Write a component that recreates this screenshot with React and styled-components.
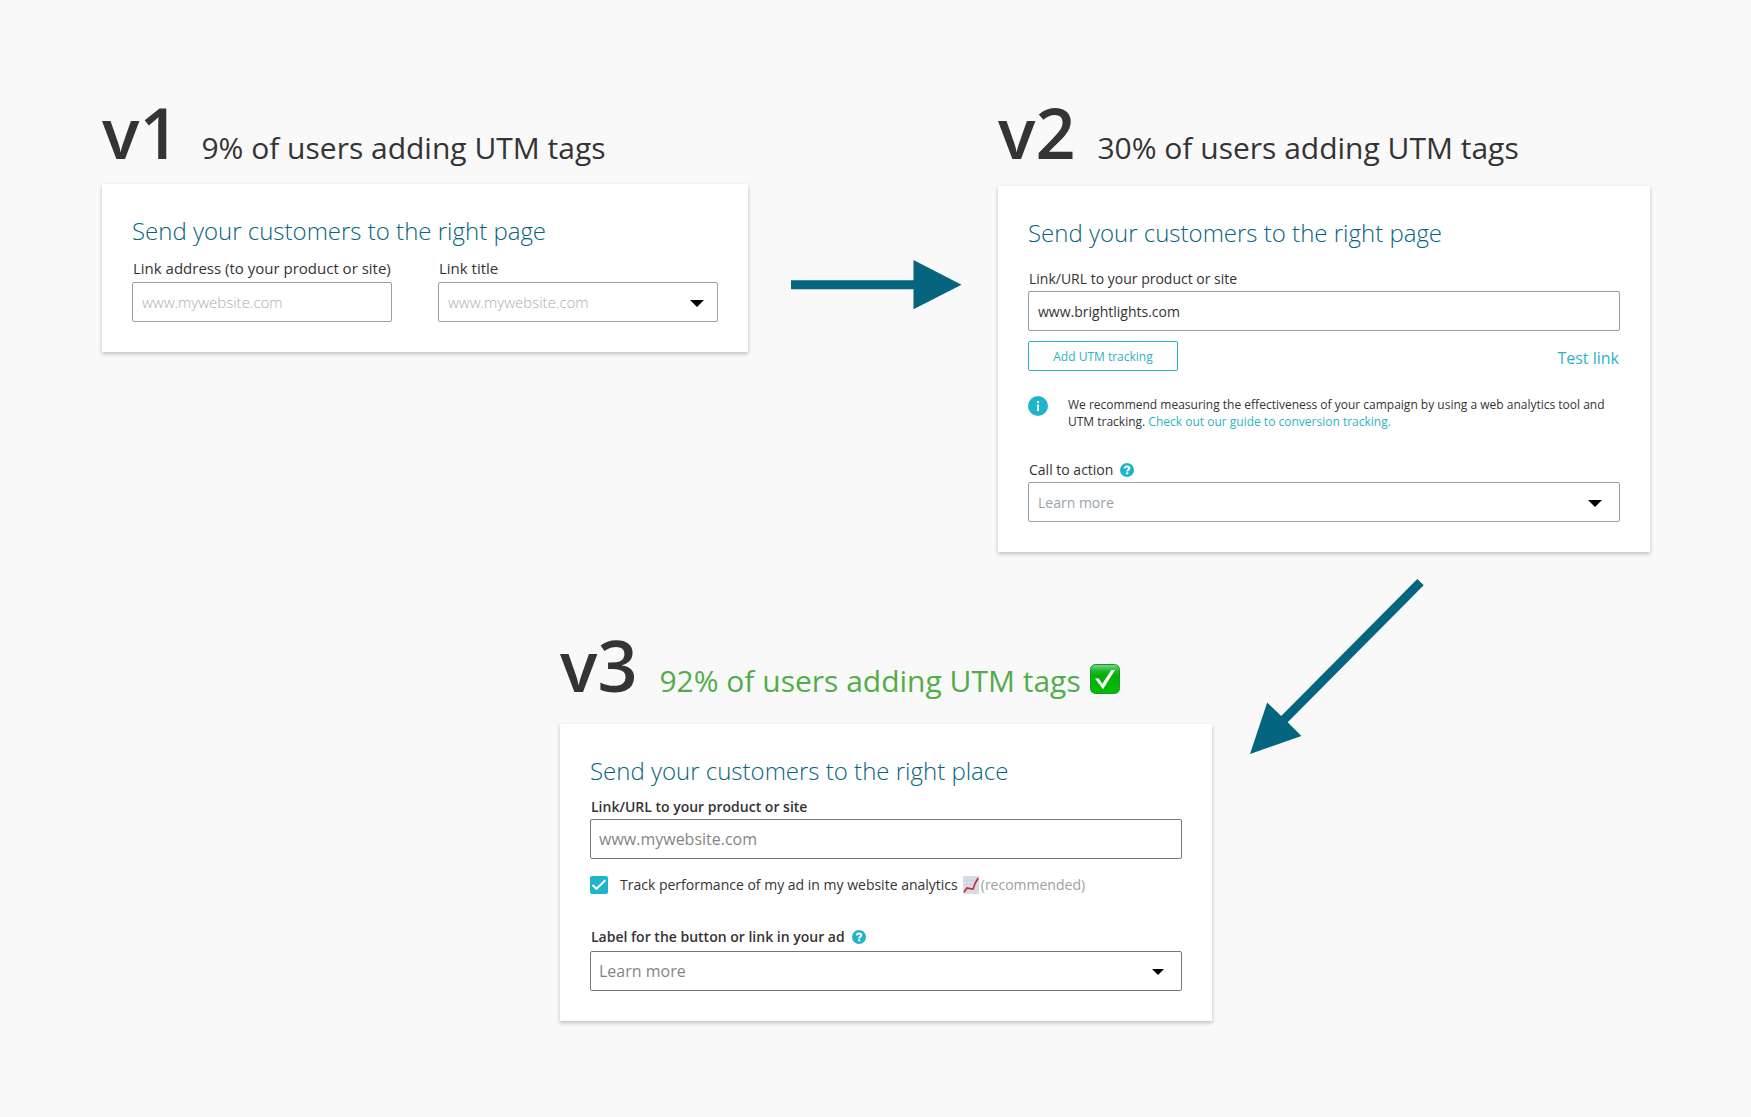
import { useState } from "react";
import styled, { createGlobalStyle } from "styled-components";

const App = () => {
  const [tracked, setTracked] = useState(true);

  return (
    <Page>
      <GlobalStyle />
      <TopRow>
        <Version>
          <Heading $gap={16}>
            <Name>v1</Name>
            <Result>9% of users adding UTM tags</Result>
          </Heading>
          <Card>
            <Title $gap={10}>Send your customers to the right page</Title>
            <FieldPair>
              <div>
                <LabelRow $gap={4}>
                  <Label htmlFor="v1-address" $size={15}>
                    Link address (to your product or site)
                  </Label>
                </LabelRow>
                <TextInput
                  id="v1-address"
                  type="text"
                  placeholder="www.mywebsite.com"
                />
              </div>
              <div>
                <LabelRow $gap={4}>
                  <Label htmlFor="v1-title" $size={15}>
                    Link title
                  </Label>
                </LabelRow>
                <Dropdown id="v1-title" option="www.mywebsite.com" faint />
              </div>
            </FieldPair>
          </Card>
        </Version>

        <RightArrow viewBox="0 0 171 50" aria-hidden="true">
          <path d="M0 20.3H122.5V0L170.5 24.8L122.5 49.3V29.3H0Z" />
        </RightArrow>

        <Version>
          <Heading $gap={18}>
            <Name>v2</Name>
            <Result>30% of users adding UTM tags</Result>
          </Heading>
          <Card>
            <Title $gap={19}>Send your customers to the right page</Title>
            <LabelRow $gap={2}>
              <Label htmlFor="v2-url">Link/URL to your product or site</Label>
            </LabelRow>
            <TextInput
              id="v2-url"
              type="text"
              defaultValue="www.brightlights.com"
            />
            <Actions>
              <OutlineButton type="button">Add UTM tracking</OutlineButton>
              <TestLink href="#test">Test link</TestLink>
            </Actions>
            <Note>
              <InfoIcon viewBox="0 0 20 20" aria-hidden="true">
                <circle cx="10" cy="10" r="10" fill="#1fb5c9" />
                <path d="M9 5h2v2H9zM9 8.5h2V15H9z" fill="#fff" />
              </InfoIcon>
              <NoteText>
                We recommend measuring the effectiveness of your campaign by
                using a web analytics tool and UTM tracking.{" "}
                <a href="#guide">Check out our guide to conversion tracking.</a>
              </NoteText>
            </Note>
            <LabelRow $gap={2}>
              <Label htmlFor="v2-action">Call to action</Label>
              <HelpIcon />
            </LabelRow>
            <Dropdown id="v2-action" option="Learn more" />
          </Card>
        </Version>
      </TopRow>

      <BottomRow>
        <FinalVersion>
          <Heading $gap={23}>
            <Name>v3</Name>
            <Result $success>
              92% of users adding UTM tags
              <CheckBadge />
            </Result>
          </Heading>
          <Card>
            <Title $gap={9}>Send your customers to the right place</Title>
            <LabelRow $gap={2}>
              <Label htmlFor="v3-url" $strong>
                Link/URL to your product or site
              </Label>
            </LabelRow>
            <TextInput
              id="v3-url"
              type="text"
              placeholder="www.mywebsite.com"
              $large
            />
            <CheckRow>
              <CheckWrap>
                <Checkbox
                  id="v3-track"
                  type="checkbox"
                  checked={tracked}
                  onChange={(e) => setTracked(e.target.checked)}
                />
                <Tick viewBox="0 0 18 18" aria-hidden="true">
                  <path d="M2.5 9L6.5 12.8L15.3 4.3" />
                </Tick>
              </CheckWrap>
              <CheckLabel htmlFor="v3-track">
                Track performance of my ad in my website analytics
                <ChartIcon />
                <Hint>(recommended)</Hint>
              </CheckLabel>
            </CheckRow>
            <LabelRow $gap={4}>
              <Label htmlFor="v3-label" $strong>
                Label for the button or link in your ad
              </Label>
              <HelpIcon />
            </LabelRow>
            <Dropdown id="v3-label" option="Learn more" large />
          </Card>
        </FinalVersion>

        <DownArrow viewBox="0 0 174 175" aria-hidden="true">
          <path d="M167.3 0L173.7 6.3L37.7 143.2L51.4 157L0 175L17.2 123.6L31.2 137Z" />
        </DownArrow>
      </BottomRow>
    </Page>
  );
};

const Dropdown = ({ id, option, large, faint }) => (
  <SelectWrap>
    <Select id={id} $large={large} $faint={faint}>
      <option>{option}</option>
    </Select>
    <Caret
      viewBox="0 0 14 7"
      $large={large}
      $inset={faint ? 14 : 18}
      aria-hidden="true"
    >
      <path d="M0 0H14L7 7Z" />
    </Caret>
  </SelectWrap>
);

const HelpIcon = () => (
  <HelpSvg viewBox="0 0 14 14" aria-hidden="true">
    <circle cx="7" cy="7" r="7" fill="#1fb5c9" />
    <path
      d="M4.7 5.5C4.8 4 5.7 3.5 7 3.5C8.4 3.5 9.3 4.1 9.3 5.2C9.3 6.8 7.2 6.6 7.2 8.4"
      fill="none"
      stroke="#fff"
      strokeWidth="2"
    />
    <rect x="6.1" y="9.3" width="2.2" height="2" fill="#fff" />
  </HelpSvg>
);

const CheckBadge = () => (
  <BadgeSvg viewBox="0 0 30 30" role="img" aria-label="Done">
    <defs>
      <linearGradient id="badge-shine" x1="0" y1="0" x2="0" y2="1">
        <stop offset="0" stopColor="#7fd98a" />
        <stop offset="0.22" stopColor="#22b52e" />
        <stop offset="0.4" stopColor="#03ad0a" />
        <stop offset="1" stopColor="#00bf00" />
      </linearGradient>
    </defs>
    <rect
      x="0.5"
      y="0.5"
      width="29"
      height="29"
      rx="5"
      fill="url(#badge-shine)"
      stroke="#149a22"
    />
    <path
      d="M5 14.6L8.4 14.2L12.4 19.8L21.3 6L25 5.9L13 25.3Z"
      fill="#fff"
    />
  </BadgeSvg>
);

const ChartIcon = () => (
  <ChartSvg viewBox="0 0 16 18" aria-hidden="true">
    <rect width="16" height="18" fill="#d6dde6" />
    <path
      d="M0 4.5H16M0 9H16M0 13.5H16M4 0V18M8 0V18M12 0V18"
      stroke="#c5cfdb"
      strokeWidth="0.5"
    />
    <path
      d="M1 16.3L4 12L10 13.2L12 7.5L15.2 2"
      fill="none"
      stroke="#bd2a38"
      strokeWidth="1.6"
    />
  </ChartSvg>
);

export default App;

const GlobalStyle = createGlobalStyle`
  *, *::before, *::after {
    box-sizing: border-box;
  }
  body {
    margin: 0;
    background: #f9f9f9;
    color: #353334;
    font-family: "Open Sans", sans-serif;
  }
  input, select, button {
    font-family: inherit;
  }
  a {
    color: #2fb2c6;
    text-decoration: none;
  }
`;

const Page = styled.main`
  padding: 96px 101px 48px 102px;
`;

const TopRow = styled.div`
  display: grid;
  grid-template-columns: 646fr 250fr 652fr;
  align-items: start;
`;

const BottomRow = styled.div`
  display: grid;
  grid-template-columns: 652fr 438fr;
  align-items: start;
  margin-top: 27px;
  padding-left: 458px;
`;

const Version = styled.section`
  min-width: 0;
`;

const FinalVersion = styled(Version)`
  padding-top: 50px;
`;

const Heading = styled.header`
  display: flex;
  align-items: baseline;
  gap: 22px;
  margin-bottom: ${(props) => props.$gap}px;
`;

const Name = styled.h1`
  margin: 0;
  font-size: 70px;
  line-height: 72px;
  font-weight: 600;
`;

const Result = styled.p`
  display: flex;
  align-items: center;
  gap: 9px;
  margin: 0;
  font-size: 30px;
  line-height: 40px;
  white-space: nowrap;
  color: ${(props) => (props.$success ? "#52ad48" : "inherit")};
`;

const Card = styled.div`
  padding: 30px;
  background: #fff;
  box-shadow: 0 2px 4px rgba(0, 0, 0, 0.24);
`;

const Title = styled.h2`
  margin: 0 0 ${(props) => props.$gap}px;
  font-size: 24px;
  line-height: 34px;
  font-weight: 300;
  color: #05647e;
`;

const FieldPair = styled.div`
  display: grid;
  grid-template-columns: 260fr 280fr;
  gap: 46px;
`;

const LabelRow = styled.div`
  display: flex;
  align-items: center;
  gap: 7px;
  padding-left: 1px;
  margin-bottom: ${(props) => props.$gap}px;
`;

const Label = styled.label`
  font-size: ${(props) => props.$size || 14}px;
  line-height: 20px;
  font-weight: ${(props) => (props.$strong ? 600 : 400)};
  white-space: nowrap;
`;

const TextInput = styled.input`
  display: block;
  width: 100%;
  height: 40px;
  padding: 0 ${(props) => (props.$large ? 8 : 9)}px;
  border: 1px solid ${(props) => (props.$large ? "#77777a" : "#9c9da5")};
  border-radius: 2px;
  background: #fff;
  color: #353334;
  font-size: ${(props) => (props.$large ? 16 : 14)}px;
  &::placeholder {
    color: ${(props) => (props.$large ? "#858585" : "#a9aeb6")};
    font-size: ${(props) => (props.$large ? 16 : 15)}px;
    font-weight: ${(props) => (props.$large ? 400 : 300)};
    opacity: 1;
  }
`;

const SelectWrap = styled.div`
  position: relative;
`;

const Select = styled.select`
  display: block;
  width: 100%;
  height: 40px;
  padding: 0 40px 0 ${(props) => (props.$large ? 8 : 9)}px;
  appearance: none;
  border: 1px solid ${(props) => (props.$large ? "#77777a" : "#9c9da5")};
  border-radius: 2px;
  background: #fff;
  color: ${(props) =>
    props.$large ? "#858585" : props.$faint ? "#a9aeb6" : "#9aa3ad"};
  font-size: ${(props) => (props.$large ? 16 : props.$faint ? 15 : 14)}px;
  font-weight: ${(props) => (props.$faint ? 300 : 400)};
`;

const Caret = styled.svg`
  position: absolute;
  top: 18px;
  right: ${(props) => props.$inset}px;
  width: ${(props) => (props.$large ? 12 : 14)}px;
  pointer-events: none;
`;

const Actions = styled.div`
  display: flex;
  align-items: flex-end;
  justify-content: space-between;
  margin-top: 10px;
`;

const OutlineButton = styled.button`
  height: 30px;
  min-width: 150px;
  padding: 0 16px;
  border: 1px solid #2fb2c6;
  border-radius: 2px;
  background: #fff;
  color: #2fb2c6;
  font-size: 12px;
  cursor: pointer;
`;

const TestLink = styled.a`
  padding-right: 1px;
  font-size: 16px;
  line-height: 26px;
`;

const Note = styled.div`
  display: flex;
  gap: 20px;
  margin: 25px 0 30px;
`;

const NoteText = styled.p`
  flex: 1;
  margin: 0;
  font-size: 12px;
  line-height: 17px;
`;

const InfoIcon = styled.svg`
  width: 20px;
  height: 20px;
`;

const HelpSvg = styled.svg`
  width: 14px;
  height: 14px;
`;

const CheckRow = styled.div`
  display: flex;
  align-items: center;
  gap: 12px;
  margin: 16px 0 32px;
`;

const CheckWrap = styled.span`
  display: grid;
  & > * {
    grid-area: 1 / 1;
  }
`;

const Checkbox = styled.input`
  width: 18px;
  height: 18px;
  margin: 0;
  appearance: none;
  border: 1px solid #1fb5c9;
  border-radius: 2px;
  &:checked {
    background: #1fb5c9;
  }
`;

const Tick = styled.svg`
  width: 18px;
  height: 18px;
  fill: none;
  stroke: #fff;
  stroke-width: 2px;
  pointer-events: none;
`;

const CheckLabel = styled.label`
  display: flex;
  align-items: center;
  font-size: 14px;
  line-height: 20px;
  white-space: nowrap;
`;

const Hint = styled.span`
  color: #a0a0a0;
`;

const ChartSvg = styled.svg`
  width: 16px;
  height: 18px;
  margin: 0 2px 0 5px;
`;

const BadgeSvg = styled.svg`
  width: 30px;
  height: 30px;
  margin-bottom: 4px;
`;

const RightArrow = styled.svg`
  width: 171px;
  margin: 164px 0 0 43px;
  fill: #05647e;
`;

const DownArrow = styled.svg`
  width: 174px;
  margin-left: 38px;
  fill: #05647e;
`;
